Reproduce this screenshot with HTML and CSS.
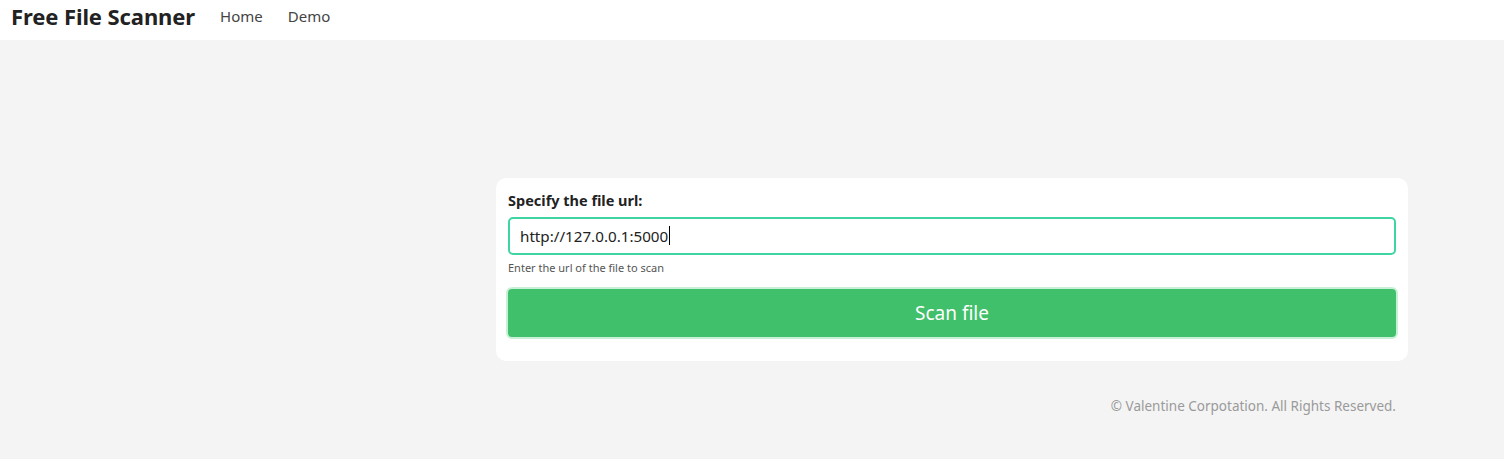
FILE: index.html
```html
<!DOCTYPE html>
<html lang="en">
<head>
<meta charset="utf-8">
<title>Free File Scanner</title>
<link rel="stylesheet" href="styles.css">
</head>
<body>
<nav class="navbar">
  <a class="brand" href="#">Free File Scanner</a>
  <a class="nav-link" href="#">Home</a>
  <a class="nav-link" href="#">Demo</a>
</nav>
<main class="main">
  <div class="column">
    <form class="card">
      <label class="label" for="url">Specify the file url:</label>
      <div class="input">http://127.0.0.1:5000<span class="caret"></span></div>
      <div class="help">Enter the url of the file to scan</div>
      <button class="btn" type="button">Scan file</button>
    </form>
    <footer class="footer">© Valentine Corpotation. All Rights Reserved.</footer>
  </div>
</main>
</body>
</html>
```
FILE: styles.css
```css
* { box-sizing: border-box; }
html, body { margin: 0; padding: 0; }
body {
  font-family: "Noto Sans", "DejaVu Sans", sans-serif;
  background: #f4f4f4;
  color: #222;
  height: 459px;
  overflow: hidden;
}
.navbar {
  height: 40px;
  background: #fff;
  display: flex;
  align-items: center;
  padding-left: 11px;
  padding-bottom: 8px;
}
.brand {
  font-weight: 700;
  font-size: 22px;
  color: #222;
  text-decoration: none;
  margin-right: 25px;
  letter-spacing: -0.1px;
}
.nav-link {
  font-size: 15px;
  color: #444;
  text-decoration: none;
  margin-right: 25px;
}
.main {
  display: flex;
  padding-top: 138px;
  padding-left: 496px;
}
.column { width: 912px; }
.card {
  background: #fff;
  border-radius: 10px;
  padding: 12px 12px 24px;
  display: flex;
  flex-direction: column;
}
.label {
  font-weight: 700;
  font-size: 14.5px;
  color: #222;
  height: 20px;
  line-height: 20px;
  margin-bottom: 7px;
}
.input {
  height: 38px;
  border: 2px solid #3dd6a3;
  border-radius: 5px;
  padding: 0 10px;
  display: flex;
  align-items: center;
  font-size: 15.2px;
  color: #222;
  padding-bottom: 1px;
}
.caret {
  display: inline-block;
  width: 1px;
  height: 19px;
  background: #000;
  margin-left: 1px;
}
.help {
  font-size: 11px;
  color: #555;
  margin-top: 5px;
  line-height: 15px;
}
.btn {
  margin-top: 14px;
  height: 48px;
  border: none;
  border-radius: 4px;
  background: #40c06a;
  color: #fff;
  font-family: inherit;
  font-size: 19px;
  box-shadow: 0 0 0 2px #c9f0d6;
}
.footer {
  text-align: right;
  padding-right: 12px;
  margin-top: 36px;
  font-size: 13.5px;
  color: #9a9a9a;
}
```
